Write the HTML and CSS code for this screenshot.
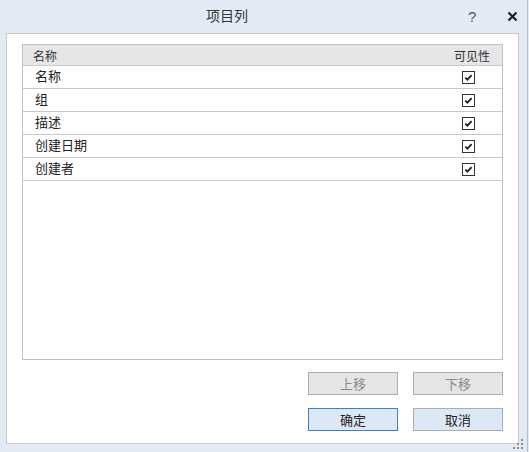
FILE: index.html
```html
<!DOCTYPE html>
<html lang="zh-CN">
<head>
    <meta charset="UTF-8">
    <title>项目列</title>
    <link rel="stylesheet" href="styles.css">
</head>
<body>
    <div class="window">
        <div class="titlebar">
            <span class="title">项目列</span>
            <span class="help">?</span>
            <span class="close">
                <svg width="11" height="11" viewBox="0 0 11 11"><path d="M1.5 1.5 L9.5 9.5 M9.5 1.5 L1.5 9.5" stroke="#1e1e1e" stroke-width="2.2" fill="none"/></svg>
            </span>
        </div>
        <div class="panel">
            <div class="list">
                <div class="list-head">
                    <span class="col-name">名称</span>
                    <span class="col-vis">可见性</span>
                </div>
                <div class="list-row"><span class="col-name">名称</span><span class="col-check"><span class="checkbox"></span></span></div>
                <div class="list-row"><span class="col-name">组</span><span class="col-check"><span class="checkbox"></span></span></div>
                <div class="list-row"><span class="col-name">描述</span><span class="col-check"><span class="checkbox"></span></span></div>
                <div class="list-row"><span class="col-name">创建日期</span><span class="col-check"><span class="checkbox"></span></span></div>
                <div class="list-row"><span class="col-name">创建者</span><span class="col-check"><span class="checkbox"></span></span></div>
            </div>
            <div class="btn-row first">
                <button class="btn disabled">上移</button>
                <button class="btn disabled">下移</button>
            </div>
            <div class="btn-row">
                <button class="btn primary">确定</button>
                <button class="btn">取消</button>
            </div>
        </div>
        <svg class="grip" width="12" height="12" viewBox="0 0 12 12">
            <rect x="9" y="1" width="2" height="2" fill="#8a8f96"/>
            <rect x="5" y="5" width="2" height="2" fill="#8a8f96"/>
            <rect x="9" y="5" width="2" height="2" fill="#8a8f96"/>
            <rect x="1" y="9" width="2" height="2" fill="#8a8f96"/>
            <rect x="5" y="9" width="2" height="2" fill="#8a8f96"/>
            <rect x="9" y="9" width="2" height="2" fill="#8a8f96"/>
        </svg>
    </div>
</body>
</html>
```

FILE: styles.css
```css
* {
    margin: 0;
    padding: 0;
    box-sizing: border-box;
}

body {
    width: 529px;
    height: 452px;
    background: #e3eaf4;
    font-family: "Noto Sans CJK SC", "Noto Sans", sans-serif;
    color: #222;
    overflow: hidden;
}

.window {
    position: relative;
    width: 528px;
    height: 452px;
    border-right: 1px solid #b8bec6;
}

.titlebar {
    display: flex;
    align-items: center;
    height: 33px;
}

.title {
    width: 454px;
    text-align: center;
    font-size: 14px;
    color: #333;
    margin-bottom: 4px;
}

.help {
    margin-left: 14px;
    font-family: "Liberation Sans", sans-serif;
    font-size: 15px;
    color: #555;
}

.close {
    display: flex;
    margin-left: 31px;
}

.panel {
    width: 513px;
    height: 411px;
    margin-left: 6px;
    background: #fff;
    border: 1px solid #c9c9c9;
    padding: 10px 15px 0 15px;
}

.list {
    height: 316px;
    border: 1px solid #c2c2c2;
}

.list-head {
    display: flex;
    align-items: center;
    height: 21px;
    background: #e6e6e6;
    border-bottom: 1px solid #c8c8c8;
    font-size: 12px;
    color: #333;
    padding-left: 10px;
}

.list-head .col-name {
    flex: 1;
}

.col-vis {
    padding-right: 12px;
}

.list-row {
    display: flex;
    align-items: center;
    height: 23px;
    border-bottom: 1px solid #c8c8c8;
    font-size: 13px;
    padding-left: 12px;
}

.list-row .col-name {
    flex: 1;
    margin-bottom: 3px;
}

.col-check {
    display: flex;
    justify-content: center;
    width: 67px;
}

.checkbox {
    display: block;
    width: 13px;
    height: 13px;
    border: 1px solid #333;
    background: #fff url("data:image/svg+xml;utf8,<svg xmlns='http://www.w3.org/2000/svg' width='11' height='11' viewBox='0 0 11 11'><path d='M2.3 5.6 L4.4 7.6 L8.6 3.2' stroke='%23222' stroke-width='1.9' fill='none'/></svg>") no-repeat center;
}

.btn-row {
    display: flex;
    justify-content: flex-end;
    gap: 15px;
    margin-top: 13px;
}

.btn-row.first {
    margin-top: 12px;
}

.btn {
    width: 90px;
    height: 23px;
    font-family: inherit;
    font-size: 13px;
    color: #222;
    background: #dde8f6;
    border: 1px solid #acacac;
}

.btn.disabled {
    background: #e5e5e5;
    border-color: #adadad;
    color: #8a8a8a;
}

.btn.primary {
    border-color: #3b83c0;
}

.grip {
    position: absolute;
    right: 3px;
    bottom: 2px;
}
```
